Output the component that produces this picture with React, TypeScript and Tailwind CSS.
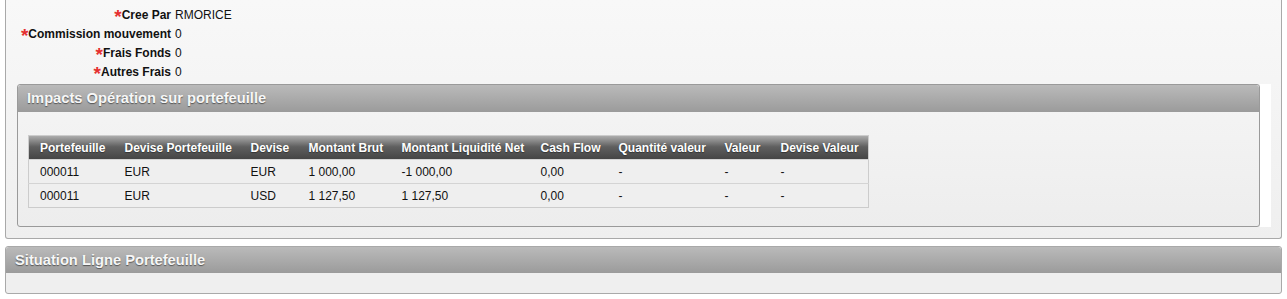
import React from 'react'

const fields = [
  { label: 'Cree Par', value: 'RMORICE' },
  { label: 'Commission mouvement', value: '0' },
  { label: 'Frais Fonds', value: '0' },
  { label: 'Autres Frais', value: '0' },
]

// column widths measured on the original grid
const cols: [string, string][] = [
  ['Portefeuille', 'w-[86px]'],
  ['Devise Portefeuille', 'w-[126px]'],
  ['Devise', 'w-[58px]'],
  ['Montant Brut', 'w-[93px]'],
  ['Montant Liquidité Net', 'w-[139px]'],
  ['Cash Flow', 'w-[78px]'],
  ['Quantité valeur', 'w-[106px]'],
  ['Valeur', 'w-[56px]'],
  ['Devise Valeur', 'w-[98px]'],
]

const rows = [
  ['000011', 'EUR', 'EUR', '1 000,00', '-1 000,00', '0,00', '-', '-', '-'],
  ['000011', 'EUR', 'USD', '1 127,50', '1 127,50', '0,00', '-', '-', '-'],
]

const head =
  'flex items-center bg-[linear-gradient(#bababa,#9b9b9b)] text-[14.7px] font-bold text-[#f7f7f7] [text-shadow:0_1px_1px_#555] rounded-t-[3px] pl-[9px]'

export default function App() {
  return (
    <div className="w-[1287px] h-[299px] bg-white font-['Liberation_Sans',Arial,sans-serif] text-[12px] text-[#111] overflow-hidden">
      <div className="mx-[5px] w-[1277px] border-x border-b border-[#a9a9a9] rounded-b-[3px] bg-[linear-gradient(#f8f8f8,#efefef)] pt-[5px] pl-[11px] pr-[10px] pb-[11px]">
        <div className="flex flex-col">
          {fields.map((f) => (
            <div key={f.label} className="flex h-[19px] items-center">
              <div className="w-[154px] flex justify-end items-center font-bold">
                <span className="text-[#e53030] text-[19px] leading-[19px] h-[19px] translate-y-[2px]">*</span>
                <span>{f.label}</span>
              </div>
              <span className="ml-[4px]">{f.value}</span>
            </div>
          ))}
        </div>
        <div className="mt-[3px] flex">
          <div className="w-[1243px] border border-[#9a9a9a] rounded-[3px] bg-[linear-gradient(#f5f5f5,#ededed)]">
            <div className={head + ' h-[27px]'}>Impacts Opération sur portefeuille</div>
            <div className="pt-[23px] pb-[17px] pl-[10px]">
              <table className="table-fixed w-[840px] border border-[#cccccc] border-collapse">
                <thead>
                  <tr className="h-[24px] bg-[linear-gradient(#acacac,#5f5f5f_45%,#434343)]">
                    {cols.map(([c, w], i) => (
                      <th
                        key={c}
                        className={
                          w +
                          ' text-left font-bold text-white whitespace-nowrap [text-shadow:0_1px_1px_#333] ' +
                          (i === 0 ? 'pl-[11px]' : 'pl-[10px]')
                        }
                      >
                        {c}
                      </th>
                    ))}
                  </tr>
                </thead>
                <tbody>
                  {rows.map((r, ri) => (
                    <tr key={ri} className="h-[24px] bg-[#efefef] border-t border-[#d4d4d4]">
                      {r.map((v, i) => (
                        <td key={i} className={'whitespace-nowrap ' + (i === 0 ? 'pl-[11px]' : 'pl-[10px]')}>
                          {v}
                        </td>
                      ))}
                    </tr>
                  ))}
                </tbody>
              </table>
            </div>
          </div>
          <div className="w-[11px] h-[143px] bg-white" />
        </div>
      </div>
      <div className="mx-[5px] mt-[7px] w-[1277px] border border-[#a9a9a9] rounded-[3px] bg-[#efefef]">
        <div className={head + ' h-[26px]'}>Situation Ligne Portefeuille</div>
        <div className="h-[20px]" />
      </div>
    </div>
  )
}
